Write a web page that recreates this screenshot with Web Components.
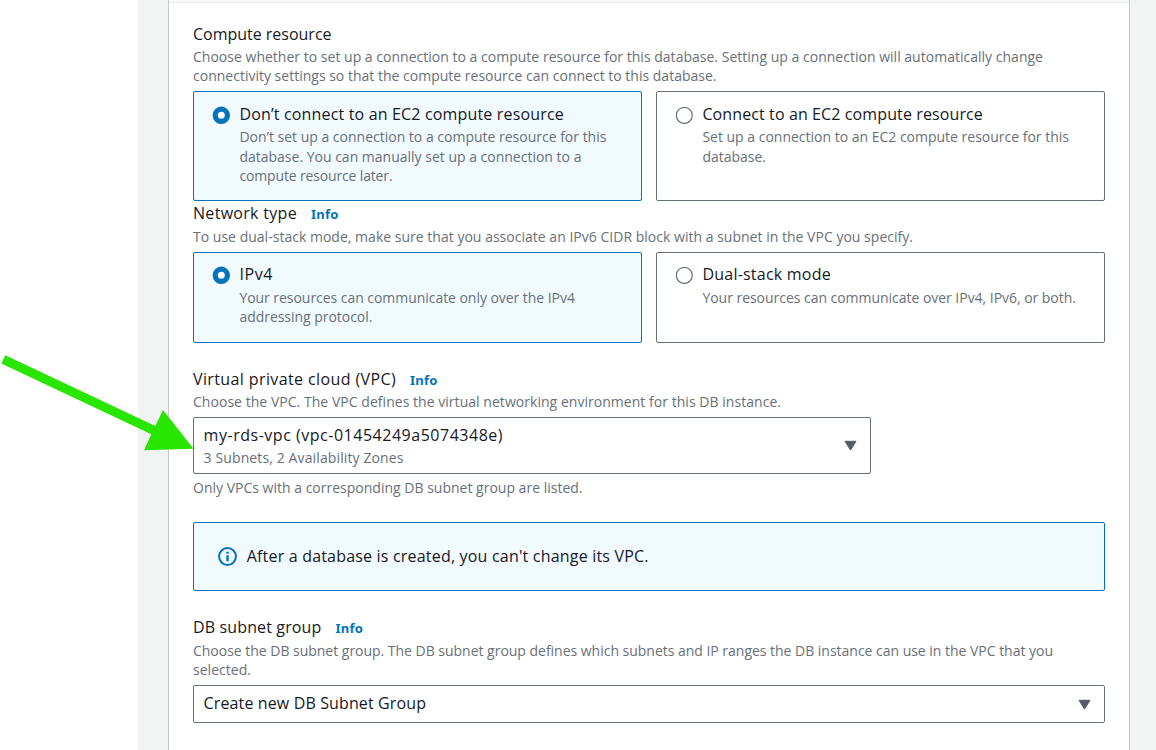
<!DOCTYPE html>
<html lang="en">
<head>
<meta charset="utf-8">
<title>Connectivity</title>
<style>
html,body{margin:0;height:100%;overflow:hidden}
body{background:#fff;font-family:"Open Sans","Noto Sans",sans-serif;color:#16191f}
</style>
</head>
<body>
<connectivity-page></connectivity-page>
<script>
const define = (name, html, ready) => {
  const t = document.createElement('template');
  t.innerHTML = html;
  customElements.define(name, class extends HTMLElement {
    constructor() {
      super();
      this.attachShadow({mode: 'open'}).appendChild(t.content.cloneNode(true));
    }
    connectedCallback() { if (ready) ready(this); }
  });
};

/* One line of copy, tracked so that it spans the measure given in "w". */
const fit = el => {
  const span = el.shadowRoot.querySelector('span');
  const w = parseFloat(el.getAttribute('w'));
  const n = el.textContent.length;
  if (w && n) span.style.letterSpacing = ((w - span.getBoundingClientRect().width) / n).toFixed(4) + 'px';
};
define('title-line', `<style>:host{display:block;font-size:16px;line-height:22px;height:22px;white-space:nowrap;color:#16191f}</style><span><slot></slot></span>`, fit);
define('hint-line', `<style>:host{display:block;font-size:14px;font-weight:440;line-height:19.5px;height:19.5px;white-space:nowrap;color:#687078}</style><span><slot></slot></span>`, fit);
define('info-link', `<style>:host{display:block;font:bold 13px/22px "Noto Sans",sans-serif;color:#0073bb;white-space:nowrap;padding-top:1px;height:21px}</style><span><slot></slot></span>`, fit);

define('field-title', `<style>:host{display:flex;gap:14px;height:24px}</style><slot></slot>`);
define('form-field', `<style>:host{display:block}</style><slot name="head"></slot><slot></slot>`);
define('tile-group', `<style>:host{display:grid;grid-template-columns:1fr 1fr;gap:14px}</style><slot></slot>`);
define('radio-tile', `<style>
:host{display:flex;box-sizing:border-box;border:1px solid #687078;border-radius:2px;padding:var(--tile-pad,11px) 19px 0;gap:9px;background:#fff}
:host([checked]){border-color:#0073bb;background:#f1faff}
svg{flex:none;width:18px;height:18px;margin-top:3.4px;margin-left:-.6px;overflow:visible}
circle{fill:#fff;stroke:#687078;stroke-width:1.2}
:host([checked]) circle{stroke:#0073bb;stroke-width:5.2;r:6.1px}
</style><svg viewBox="0 0 18 18"><circle cx="9.3" cy="9.3" r="8"/></svg><div><slot></slot></div>`);
define('select-box', `<style>
:host{display:flex;align-items:center;justify-content:space-between;box-sizing:border-box;border:1px solid #687078;border-radius:2px;background:#fff;padding:0 13px 0 9.6px}
svg{display:block;width:13px;height:11px}
</style><div><slot></slot></div><svg viewBox="0 0 13 11"><path d="M1 1.3H12L6.5 10.1Z" fill="#545b64" stroke="#545b64" stroke-width="1" stroke-linejoin="round"/></svg>`);
define('info-alert', `<style>
:host{display:flex;align-items:center;box-sizing:border-box;border:1px solid #0073bb;border-radius:2px;background:#f1faff;padding:0 24px;gap:9.7px}
svg{width:19px;height:19px}
</style><svg viewBox="0 0 19 19" fill="none" stroke="#0073bb" stroke-width="2"><circle cx="9.5" cy="9.5" r="8.4"/><path d="M9.5 4.8v2M9.5 8.3v6" stroke-width="2.4"/></svg><slot></slot>`);
define('pointer-arrow', `<style>:host{position:absolute;left:0;top:350px;width:200px;height:110px}svg{display:block}</style>
<svg width="200" height="110" viewBox="0 350 200 110"><path d="M5.3 355.2L155.3 426L163 410L193.5 448.7L144 450.2L151.3 434.2L1.3 363.6Z" fill="#29e600"/></svg>`);
define('settings-panel', `<style>
:host{display:block;box-sizing:border-box;width:962px;height:750px;border:solid #c3c8c9;border-width:0 1px;background:#fff;overflow:hidden}
header{height:2px;background:#fafafa;border-bottom:1px solid #eaeded}
main{padding:20px 24px 0}
</style><header></header><main><slot></slot></main>`);
define('connectivity-page', `<style>
:host{display:block;position:relative;width:1156px;height:750px;overflow:hidden}
.canvas{margin-left:138px;padding-left:30px;height:750px;background:#f2f3f3}
</style>
<div class="canvas"><settings-panel>
 <form-field style="height:179px">
  <field-title slot="head" style="height:23.75px"><title-line w="138.5">Compute resource</title-line></field-title>
  <hint-line w="850">Choose whether to set up a connection to a compute resource for this database. Setting up a connection will automatically change</hint-line>
  <hint-line w="523.5">connectivity settings so that the compute resource can connect to this database.</hint-line>
  <tile-group style="height:110px;margin-top:5.25px">
   <radio-tile checked><title-line w="324.5">Don’t connect to an EC2 compute resource</title-line>
    <hint-line w="367" style="margin-top:2.2px">Don’t set up a connection to a compute resource for this</hint-line><hint-line w="342">database. You can manually set up a connection to a</hint-line><hint-line w="153">compute resource later.</hint-line></radio-tile>
   <radio-tile><title-line w="280.5">Connect to an EC2 compute resource</title-line>
    <hint-line w="366.5" style="margin-top:2.2px">Set up a connection to an EC2 compute resource for this</hint-line><hint-line w="63.5">database.</hint-line></radio-tile>
  </tile-group>
 </form-field>
 <form-field style="height:166px">
  <field-title slot="head" style="height:25px"><title-line w="104">Network type</title-line><info-link w="27.5">Info</info-link></field-title>
  <hint-line w="720">To use dual-stack mode, make sure that you associate an IPv6 CIDR block with a subnet in the VPC you specify.</hint-line>
  <tile-group style="height:91px;margin-top:5.5px;--tile-pad:10px">
   <radio-tile checked><title-line w="33.5">IPv4</title-line>
    <hint-line w="335.5" style="margin-top:2.75px">Your resources can communicate only over the IPv4</hint-line><hint-line w="133">addressing protocol.</hint-line></radio-tile>
   <radio-tile><title-line w="128.5">Dual-stack mode</title-line>
    <hint-line w="373.5" style="margin-top:2.75px">Your resources can communicate over IPv4, IPv6, or both.</hint-line></radio-tile>
  </tile-group>
 </form-field>
 <form-field style="height:154px">
  <field-title slot="head"><title-line w="203">Virtual private cloud (VPC)</title-line><info-link w="27.5">Info</info-link></field-title>
  <hint-line w="588">Choose the VPC. The VPC defines the virtual networking environment for this DB instance.</hint-line>
  <select-box style="width:678px;height:57px;margin-top:5.5px"><title-line w="299.5" style="padding-top:1px">my-rds-vpc (vpc-01454249a5074348e)</title-line><hint-line w="200" style="margin-top:2px">3 Subnets, 2 Availability Zones</hint-line></select-box>
  <hint-line w="389.5" style="margin-top:4px">Only VPCs with a corresponding DB subnet group are listed.</hint-line>
 </form-field>
 <info-alert style="height:69px"><title-line w="402" style="margin-bottom:1px">After a database is created, you can't change its VPC.</title-line></info-alert>
 <form-field style="padding-top:25px">
  <field-title slot="head" style="height:24.75px"><title-line w="128.5">DB subnet group</title-line><info-link w="27.5">Info</info-link></field-title>
  <hint-line w="860">Choose the DB subnet group. The DB subnet group defines which subnets and IP ranges the DB instance can use in the VPC that you</hint-line>
  <hint-line w="58">selected.</hint-line>
  <select-box style="height:38px;margin-top:5.25px"><title-line w="222.5" style="margin-bottom:2px">Create new DB Subnet Group</title-line></select-box>
 </form-field>
</settings-panel></div>
<pointer-arrow></pointer-arrow>`);
</script>
</body>
</html>
